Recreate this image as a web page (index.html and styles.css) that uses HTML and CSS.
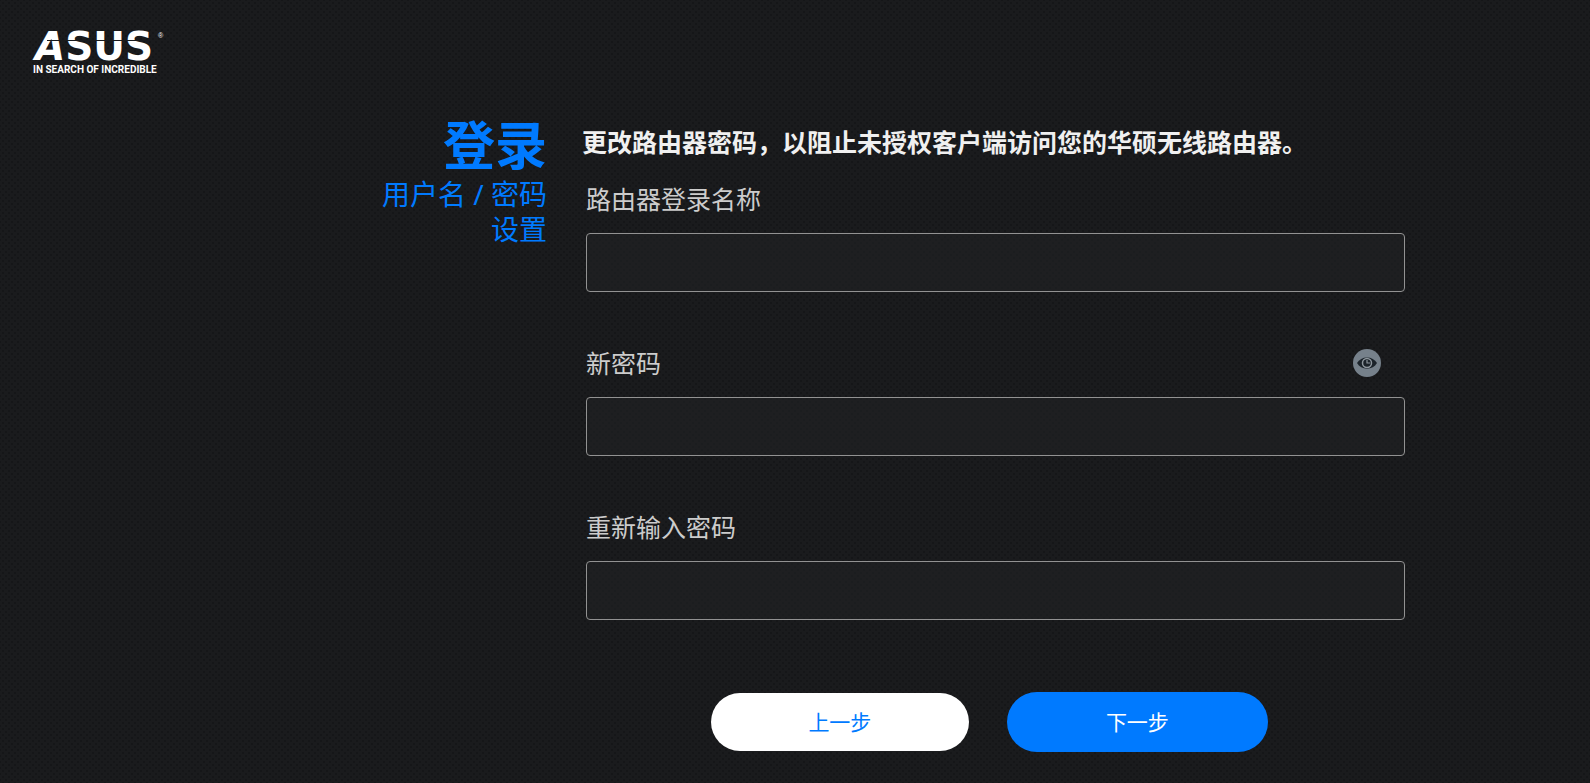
FILE: index.html
```html
<!DOCTYPE html>
<html lang="zh-CN">
    <head>
        <meta charset="utf-8">
        <title>ASUS</title>
        <link rel="stylesheet" href="styles.css">
    </head>

    <body>
        <header class="top">
            <div class="logo">
                <div class="logo-name"><span class="slant">A</span>SUS<span class="logo-reg">®</span></div>
                <div class="logo-tag">IN SEARCH OF INCREDIBLE</div>
            </div>
        </header>

        <main class="page">
            <div class="side">
                <h1>登录</h1>
                <p class="subtitle">用户名 / 密码设置</p>
            </div>

            <form class="login">
                <h2>更改路由器密码，以阻止未授权客户端访问您的华硕无线路由器。</h2>

                <div class="field">
                    <label for="username">路由器登录名称</label>
                    <input type="text" id="username">
                </div>

                <div class="field">
                    <div class="label-row">
                        <label for="password">新密码</label>
                        <button type="button" class="eye" id="eye" aria-label="显示密码">
                            <svg width="28" height="28" viewBox="0 0 28 28">
                                <circle cx="14" cy="14" r="14" fill="#76818b"/>
                                <path d="M4 14C8 6.500 20 6.500 24 14C20 21.500 8 21.500 4 14Z" fill="#1b232a"/>
                                <circle cx="14" cy="14" r="4.500" fill="none" stroke="#8d969d" stroke-width="1.500"/>
                                <path d="M14 11v3h3" fill="none" stroke="#8d969d" stroke-width="1.200"/>
                            </svg>
                        </button>
                    </div>
                    <input type="password" id="password">
                </div>

                <div class="field">
                    <label for="confirm">重新输入密码</label>
                    <input type="password" id="confirm">
                </div>

                <div class="buttons">
                    <button type="button" class="btn prev">上一步</button>
                    <button type="submit" class="btn next">下一步</button>
                </div>
            </form>
        </main>

        <script>
            // Toggle the new password between dots and plain text
            document.getElementById("eye").addEventListener("click", function() {
                const input = document.getElementById("password");
                input.type = input.type === "password" ? "text" : "password";
            });
        </script>
    </body>
</html>
```

FILE: styles.css
```css
* {
    box-sizing: border-box;
}
body {
    margin: 0;
    min-height: 100vh;
    background-color: #1a1b1d;
    background-image:
        radial-gradient(circle, #151618 1px, transparent 1px),
        radial-gradient(circle, #151618 1px, transparent 1px);
    background-size: 6px 6px;
    background-position: 0 0, 3px 3px;
    color: #ccc;
    font-family: "Noto Sans", "Noto Sans CJK SC", sans-serif;
}
h1, h2, p {
    margin: 0;
}
.top {
    padding: 31px 33px 0;
}
.logo {
    position: relative;
    width: max-content;
    color: #fff;
}
/* thin cut through the upper part of the letters */
.logo::after {
    content: "";
    position: absolute;
    top: 9px;
    left: 14px;
    width: 110px;
    height: 1px;
    background: #1a1b1d;
}
.logo-name {
    display: flex;
    padding-left: 2px;
    font: bold 39px/32px "DejaVu Sans", sans-serif;
}
.slant {
    font-style: oblique;
}
.logo-reg {
    padding-left: 5px;
    font: 7px/10px "Liberation Sans", sans-serif;
}
.logo-tag {
    font: bold 10px/14px "Roboto", sans-serif;
}
.page {
    display: grid;
    grid-template-columns: 34.4% 51.5%;
    column-gap: 39px;
    padding-top: 36px;
}
.side {
    display: flex;
    flex-direction: column;
    align-items: flex-end;
    color: #007aff;
    text-align: right;
}
h1 {
    font-size: 52px;
    line-height: 64px;
}
.subtitle {
    width: 172px;
    font-size: 28px;
    line-height: 35px;
}
h2 {
    margin-left: -4px;
    padding: 9px 0 23px;
    color: #f0f0f0;
    font-size: 25px;
    line-height: 40px;
}
.field {
    margin-bottom: 57px;
}
.label-row {
    display: flex;
    justify-content: space-between;
    padding-right: 24px;
}
label {
    display: block;
    padding-bottom: 20px;
    font-size: 25px;
    line-height: 28px;
}
.eye {
    width: 28px;
    height: 28px;
    padding: 0;
    border: 0;
    background: none;
    cursor: pointer;
}
.eye svg {
    display: block;
}
input {
    display: block;
    width: 100%;
    height: 59px;
    padding: 0 16px;
    border: 1px solid #929292;
    border-radius: 4px;
    background: rgba(34, 35, 37, 0.5);
    color: #fff;
    font-size: 25px;
}
.buttons {
    display: flex;
    justify-content: center;
    align-items: center;
    gap: 38px;
    margin-top: 72px;
    padding: 0 12px 30px 0;
}
.btn {
    padding: 0 0 2px;
    border: 0;
    border-radius: 30px;
    font-family: inherit;
    font-size: 21px;
    cursor: pointer;
}
.prev {
    width: 258px;
    height: 58px;
    background: #fff;
    color: #007aff;
}
.next {
    width: 261px;
    height: 60px;
    background: #007aff;
    color: #fff;
}
```
